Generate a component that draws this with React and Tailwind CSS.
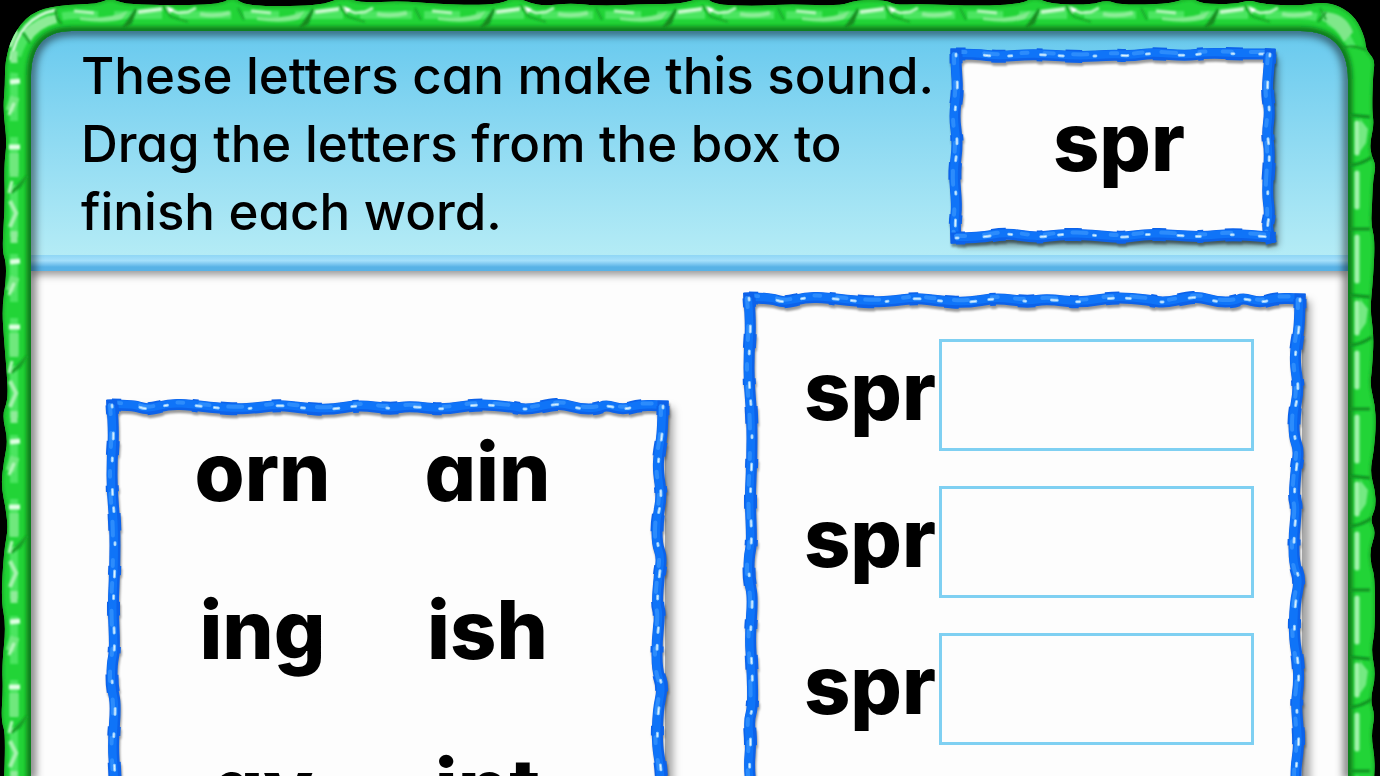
import { useState } from "react";

const FONT =
  "font-['Inter','Noto_Sans',sans-serif] [font-feature-settings:'cv11']";

const ENDINGS = ["orn", "ain", "ing", "ish", "ay", "int"];
const BLANKS = [1, 2, 3];

// Edges of the rope that frames the big panels
const PANEL_ROPE = [
  [
    [5, 5], [27, 5], [40, 10], [63, 4], [83, 5], [110, 8], [130, 9], [150, 8], [172, 5],
    [195, 8], [222, 10], [252, 5], [283, 9], [303, 6], [336, 10], [370, 4], [405, 7],
    [420, 10], [443, 5], [456, 4], [473, 9], [490, 9], [499, 5], [516, 10], [533, 5], [556, 6],
  ],
  [
    [5, 5], [7, 30], [5, 60], [5, 90], [8, 123], [8, 167], [6, 205], [8, 250], [5, 264],
    [5, 287], [9, 304], [6, 344], [8, 374], [9, 414], [5, 427], [7, 450], [5, 474], [8, 500],
    [8, 540], [5, 580], [7, 620],
  ],
  [
    [556, 6], [556, 30], [552, 54], [551, 70], [555, 97], [550, 120], [550, 144], [555, 157],
    [552, 177], [550, 204], [553, 214], [550, 240], [550, 270], [556, 287], [551, 310],
    [550, 344], [554, 367], [555, 390], [552, 410], [555, 444], [554, 460], [552, 474],
    [552, 500], [556, 540], [551, 580], [554, 620],
  ],
];

// Rope round the sound card in the header
const CARD_ROPE = [
  [
    [6, 6], [25, 6], [49, 9], [82, 6], [129, 9], [162, 7], [182, 8], [202, 5], [236, 8],
    [256, 5], [289, 6], [320, 6],
  ],
  [
    [6, 6], [6, 19], [8, 42], [4, 68], [8, 95], [4, 125], [7, 158], [5, 175], [6, 190],
  ],
  [
    [320, 6], [319, 19], [317, 42], [320, 65], [317, 85], [320, 105], [317, 145],
    [320, 165], [317, 178], [320, 190],
  ],
  [
    [6, 190], [29, 190], [56, 185], [86, 190], [112, 186], [142, 187], [172, 190],
    [196, 186], [222, 187], [252, 189], [282, 186], [320, 189],
  ],
];

// Outer edge of the green vine, clockwise from the bottom left
const VINE = [
  [4, 780], [6, 735], [1, 720], [3, 690], [2, 665], [6, 625], [1, 600], [4, 550], [8, 530],
  [6, 510], [1, 485], [4, 460], [8, 440], [2, 415], [8, 400], [7, 375], [4, 340], [2, 308],
  [6, 280], [6, 262], [2, 250], [5, 205], [4, 165], [7, 142], [3, 110], [5, 85], [5, 62],
  [12, 36], [30, 13], [58, 5], [98, 4], [110, -2], [124, 4], [160, 5], [200, 5], [222, 3],
  [233, -3], [243, 4], [262, 6], [300, 6], [325, 4], [343, -3], [362, 3], [400, 1], [440, 4],
  [472, 5], [500, 4], [515, -3], [530, 3], [545, 6], [570, 3], [600, 6], [650, 4], [680, 4],
  [705, -3], [716, 5], [760, 6], [790, 4], [840, 6], [856, 0], [886, 0], [895, 5], [920, 4],
  [980, 6], [1020, 4], [1035, -3], [1050, 4], [1090, 5], [1107, 0], [1120, 5], [1170, 4],
  [1190, -3], [1202, 4], [1235, 4], [1250, 0], [1262, 4], [1300, 6], [1322, 2], [1340, 6],
  [1356, 18], [1365, 38], [1366, 50], [1375, 60], [1373, 75], [1372, 110], [1374, 125],
  [1370, 142], [1371, 155], [1376, 165], [1373, 180], [1372, 205], [1371, 225], [1375, 240],
  [1373, 280], [1370, 310], [1374, 335], [1372, 370], [1370, 385], [1375, 405], [1376, 425],
  [1374, 450], [1370, 472], [1375, 490], [1376, 507], [1370, 520], [1376, 532], [1370, 549],
  [1371, 565], [1375, 577], [1375, 632], [1371, 650], [1376, 675], [1370, 700], [1375, 715],
  [1371, 735], [1375, 760], [1374, 780],
];

const INNER = "31 780 31 76Q31 31 72 31L1300 31Q1348 31 1348 80L1348 780";

const TOP_KNOTS = [130, 307, 488, 670, 852, 1033, 1212];
const LEFT_KNOTS = [5, 185, 365, 545, 725];
const RIGHT_KNOTS = [115, 295, 476, 657];

// Soft curve through the midpoints of the given points
function smooth(points) {
  let d = `M${points[0][0]} ${points[0][1]}`;
  for (let i = 1; i < points.length - 1; i++) {
    const [x, y] = points[i];
    const [nx, ny] = points[i + 1];
    d += `Q${x} ${y} ${(x + nx) / 2} ${(y + ny) / 2}`;
  }
  const last = points[points.length - 1];
  return `${d}L${last[0]} ${last[1]}`;
}

function Rope({ edges, viewBox, className }) {
  return (
    <svg
      viewBox={viewBox}
      preserveAspectRatio="none"
      aria-hidden="true"
      fill="none"
      className={`pointer-events-none absolute top-0 left-0 w-full overflow-visible drop-shadow-[1px_3px_1px_rgba(0,0,0,0.4)] ${className}`}
    >
      {edges.map((points, i) => {
        const d = smooth(points);
        const flat = i === 0 || i === 3;
        return (
          <g key={i}>
            <path d={d} stroke="#0c62ea" strokeWidth="11" strokeLinecap="square" />
            {/* lumps of the twist */}
            <path
              d={d}
              stroke="#0c62ea"
              strokeWidth="13"
              strokeDasharray="9 27 14 31 6 22 17 35"
            />
            <path
              d={d}
              stroke="#0f74f8"
              strokeWidth="8"
              transform={flat ? "translate(0 -1)" : "translate(-1 0)"}
            />
            <path
              d={d}
              stroke="#2c8cfc"
              strokeWidth="4"
              strokeDasharray="9 19 14 24 6 17"
              strokeLinecap="round"
              transform={flat ? "translate(0 -2)" : "translate(-2 0)"}
            />
            <path
              d={d}
              stroke="#8fcbff"
              strokeWidth="3"
              strokeDasharray="2 26 6 19 3 29 5 13 4 31"
              strokeLinecap="round"
            />
            <path
              d={d}
              stroke="#e4f4ff"
              strokeWidth="1"
              strokeDasharray="2 26 6 19 3 29 5 13 4 31"
              strokeLinecap="round"
            />
          </g>
        );
      })}
    </svg>
  );
}

function Vine() {
  const outer = smooth(VINE);
  return (
    <svg
      viewBox="0 0 1380 776"
      preserveAspectRatio="none"
      aria-hidden="true"
      fill="none"
      className="pointer-events-none absolute inset-0 h-full w-full"
    >
      <defs>
        <filter id="soft" x="-20%" y="-20%" width="140%" height="140%">
          <feGaussianBlur stdDeviation="1" />
        </filter>
        <filter id="edge" filterUnits="userSpaceOnUse" x="0" y="0" width="1380" height="790">
          <feGaussianBlur stdDeviation="2" />
        </filter>
        <filter id="shade" filterUnits="userSpaceOnUse" x="0" y="0" width="1380" height="790">
          <feGaussianBlur stdDeviation="4" />
        </filter>
        <clipPath id="vine">
          <path d={`${outer}L1348 780L1348 80Q1348 31 1300 31L72 31Q31 31 31 76L31 780Z`} />
        </clipPath>
      </defs>
      <path d={`M${INNER}`} stroke="#000" strokeOpacity="0.6" strokeWidth="8" filter="url(#shade)" />
      <path d="M-10 780V-10H1390V780H1348V80Q1348 31 1300 31H72Q31 31 31 76V780Z" fill="#000" />
      <g clipPath="url(#vine)">
        <path d="M0 0H1380V780H0Z" fill="#22d437" />
        <path d={outer} stroke="#1bb52c" strokeWidth="4" filter="url(#soft)" />
        <path d={`M${INNER}`} stroke="#0f7d1a" strokeWidth="9" filter="url(#edge)" />

        {/* long glossy streaks */}
        <path
          d="M14 780V76Q18 16 76 15H1296Q1346 14 1356 60"
          stroke="#4be560"
          strokeWidth="8"
          strokeDasharray="52 12 36 16 48 17"
          filter="url(#soft)"
        />
        <path
          d="M1359 56V780"
          stroke="#4fe262"
          strokeWidth="10"
          strokeDasharray="56 10 40 8 58 9"
          filter="url(#soft)"
        />

        {/* corners */}
        <path d="M24 31Q37 17 57 14L57 23Q38 28 30 42Z" fill="#8deb96" filter="url(#soft)" />
        <path d="M11 60Q19 17 56 10" stroke="#d9fadd" strokeWidth="3" filter="url(#soft)" />
        <path d="M1322 12Q1346 12 1353 32L1344 42Q1338 28 1322 20Z" fill="#7fe78a" filter="url(#soft)" />
        <path
          d="M23 33L30 43M56 9Q55 18 62 24M1343 48Q1352 44 1366 50M1318 22L1326 12"
          stroke="#149422"
          strokeWidth="2"
          filter="url(#soft)"
        />

        {TOP_KNOTS.map((x) => (
          <g key={x} transform={`translate(${x} 0)`} filter="url(#soft)">
            <path d="M-7 28L6 9L1 23Z" stroke="#138a20" fill="#138a20" strokeWidth="2" />
            <path d="M8 12L32 9" stroke="#c9f8ce" strokeWidth="4" />
            <path d="M38 9L48 13L58 12L66 8M-56 11L-36 13" stroke="#b5f4bc" strokeWidth="3" />
            <path d="M36 6L44 9L40 13Z" fill="#fff" />
            <path d="M32 5L41 17L58 22M108 8L114 20" stroke="#1aa82a" strokeWidth="2" />
            <path d="M-50 17Q-24 20 -2 11L-8 19Q-24 24 -50 20Z" fill="#83ea8e" />
            <path d="M70 14Q84 17 100 13" stroke="#8fee99" strokeWidth="4" />
          </g>
        ))}
        {LEFT_KNOTS.map((y) => (
          <g key={y} transform={`translate(0 ${y})`} filter="url(#soft)">
            <path d="M11 8L27 -9L20 2Z" fill="#17a026" stroke="#17a026" strokeWidth="2" />
            <path d="M10 16L16 28L10 42" stroke="#a9f2b0" strokeWidth="4" />
            <path d="M10 77L20 76M9 -38H20" stroke="#e0ffe3" strokeWidth="5" />
            <path d="M14 -32V-8M15 92L10 106" stroke="#6fe87d" strokeWidth="9" />
            <path d="M14 46V58" stroke="#8feb99" strokeWidth="7" />
            <path d="M14 98L9 110M12 -4L9 8" stroke="#b8f7bd" strokeWidth="3" />
          </g>
        ))}
        {RIGHT_KNOTS.map((y) => (
          <g key={y} transform={`translate(0 ${y})`} filter="url(#soft)">
            <path
              d="M1350 0L1370 2M1350 50Q1360 50 1372 42M1350 114H1370"
              stroke="#109020"
              strokeWidth="3"
            />
            <path
              d="M1357 8V38M1357 58V92M1357 122V166"
              stroke="#a3f2ac"
              strokeWidth="5"
              strokeLinecap="round"
            />
            <path d="M1360 4L1368 14L1366 28L1359 38Z" fill="#74e983" />
          </g>
        ))}
      </g>
    </svg>
  );
}

function Header() {
  return (
    <header className="relative flex h-[241px] items-start justify-between bg-linear-to-b from-[#67c9ee] to-[#b9eef6] pt-3 pr-[72px] pl-[50px] shadow-[0_4px_8px_rgba(0,0,0,0.4)]">
      <p className="w-[880px] text-[51px] leading-[68px] font-medium">
        These letters can make this sound. Drag the letters from the box to
        finish each word.
      </p>
      <div className="relative mt-[6px] flex h-[196px] w-[326px] shrink-0 items-center justify-center pb-2 pl-3">
        <div className="absolute inset-1 bg-[#fdfdfd] shadow-[6px_6px_7px_rgba(0,0,0,0.4)]" />
        <Rope edges={CARD_ROPE} viewBox="0 0 326 196" className="h-full" />
        <strong className="relative text-[81px] leading-none font-extrabold">spr</strong>
      </div>
      <div className="absolute inset-x-0 bottom-0 h-4 bg-linear-to-b from-[#8fd6f5] via-[#a5e0fb] via-35% to-[#58b2e6] to-75%" />
    </header>
  );
}

export default function App() {
  const [answers, setAnswers] = useState({});

  const drop = (event, id) => {
    event.preventDefault();
    setAnswers({ ...answers, [id]: event.dataTransfer.getData("text") });
  };

  return (
    <div className={`relative h-screen overflow-hidden bg-black pt-[30px] pr-8 pl-[31px] text-black ${FONT}`}>
      <div className="min-h-full rounded-t-[40px] bg-[#fdfdfd]">
        <Header />
        <main className="flex items-start gap-[75px] pt-[22px] pr-[42px] pl-[76px]">
          <section className="relative mt-[107px] h-[620px] flex-1">
            <div className="absolute inset-1 bg-[#fdfdfd] shadow-[8px_4px_8px_rgba(0,0,0,0.35)]" />
            <Rope edges={PANEL_ROPE} viewBox="0 0 562 620" className="h-[620px]" />
            <div className="relative grid grid-cols-[225px_225px] pt-6 pl-[43px]">
              {ENDINGS.map((ending) => (
                <button
                  key={ending}
                  type="button"
                  draggable
                  onDragStart={(e) => e.dataTransfer.setData("text", ending)}
                  className="mb-[62px] h-24 cursor-grab text-[81px] leading-[96px] font-extrabold"
                >
                  {ending}
                </button>
              ))}
            </div>
          </section>

          <section className="relative h-[620px] flex-1">
            <div className="absolute inset-1 bg-[#fdfdfd] shadow-[8px_4px_8px_rgba(0,0,0,0.35)]" />
            <Rope edges={PANEL_ROPE} viewBox="0 0 562 620" className="h-[620px]" />
            <div className="relative flex flex-col gap-[35px] pt-[46px] pr-[52px]">
              {BLANKS.map((id) => (
                <div key={id} className="flex items-center justify-end gap-[3px]">
                  <label
                    htmlFor={`blank-${id}`}
                    className="pb-2 text-[81px] leading-none font-extrabold"
                  >
                    spr
                  </label>
                  <input
                    id={`blank-${id}`}
                    type="text"
                    value={answers[id] || ""}
                    onChange={(e) => setAnswers({ ...answers, [id]: e.target.value })}
                    onDragOver={(e) => e.preventDefault()}
                    onDrop={(e) => drop(e, id)}
                    className="h-28 w-[315px] border-3 border-[#7fd0f2] bg-[#fdfdfd] px-1 text-[81px] font-extrabold outline-none"
                  />
                </div>
              ))}
            </div>
          </section>
        </main>
      </div>
      <Vine />
    </div>
  );
}
